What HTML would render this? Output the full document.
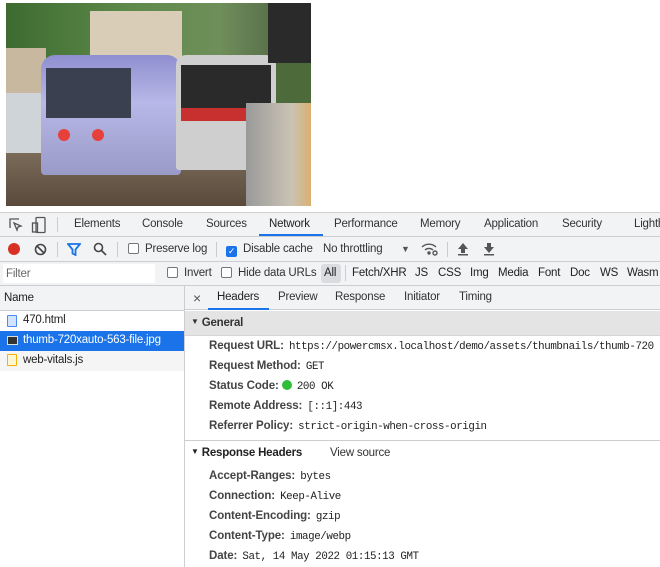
<!DOCTYPE html>
<html><head><meta charset="utf-8"><style>
*{box-sizing:border-box;margin:0;padding:0}
body{width:660px;height:567px;overflow:hidden;background:#fff;font-family:"Liberation Sans",sans-serif;font-size:11.5px;letter-spacing:-0.2px;color:#333;position:relative}
.a{position:absolute;white-space:nowrap}
.mono{font-family:"Liberation Mono",monospace;font-size:10.8px;letter-spacing:-0.4px;font-weight:normal;color:#222;margin-left:2px}
.k{font-weight:bold;color:#444;letter-spacing:-0.1px}
.cb{display:inline-block;width:11px;height:11px;border:1px solid #777;border-radius:2px;vertical-align:-2px;margin-right:6px;background:#fff}
</style></head><body>
<div class="a" style="left:6px;top:3px;width:305px;height:203px;overflow:hidden;background:#4c6a3a">
 <div class="a" style="left:0;top:0;width:305px;height:60px;background:linear-gradient(90deg,#3d6a30,#5d8a4a 40%,#6f8f5a 70%,#4a5a40)"></div>
 <div class="a" style="left:84px;top:8px;width:92px;height:60px;background:#d9cdb8"></div>
 <div class="a" style="left:0;top:45px;width:40px;height:50px;background:#c8b8a0"></div>
 <div class="a" style="left:0;top:90px;width:40px;height:60px;background:#cfd4d8"></div>
 <div class="a" style="left:0;top:150px;width:305px;height:53px;background:linear-gradient(#7a6a58,#5a4a3c)"></div>
 <div class="a" style="left:35px;top:52px;width:140px;height:120px;background:linear-gradient(#8f8fd0,#b8b8e8 40%,#9a9ac8);border-radius:14px 14px 4px 4px"></div>
 <div class="a" style="left:40px;top:65px;width:85px;height:50px;background:#3a4050"></div>
 <div class="a" style="left:52px;top:126px;width:12px;height:12px;border-radius:50%;background:#e6403a"></div>
 <div class="a" style="left:86px;top:126px;width:12px;height:12px;border-radius:50%;background:#e6403a"></div>
 <div class="a" style="left:170px;top:52px;width:100px;height:115px;background:#cfcfcf;border-radius:10px 10px 3px 3px"></div>
 <div class="a" style="left:175px;top:62px;width:90px;height:45px;background:#2a2a2a"></div>
 <div class="a" style="left:175px;top:105px;width:90px;height:13px;background:#c83030"></div>
 <div class="a" style="left:240px;top:100px;width:65px;height:103px;background:linear-gradient(90deg,#9a9a9a,#c9c3b4 70%,#d9b070)"></div>
 <div class="a" style="left:262px;top:0;width:43px;height:60px;background:#2a2a2a"></div>
</div>
<div class="a" style="left:0;top:212px;width:660px;height:25px;background:#f1f3f4;border-bottom:1px solid #cbcdd1;border-top:1px solid #d0d0d0"></div>
<svg class="a" style="left:8px;top:217px" width="16" height="16" viewBox="0 0 16 16" fill="none" stroke="#555" stroke-width="1.3"><path d="M2 11V2h9"/><path d="M6 6l7 3-3 1-1 3z"/></svg>
<svg class="a" style="left:31px;top:216px" width="16" height="18" viewBox="0 0 16 18" fill="none" stroke="#555" stroke-width="1.3"><rect x="5" y="1.5" width="9" height="15" rx="1"/><rect x="1.5" y="7" width="5" height="9"/></svg>
<div class="a" style="left:57px;top:217px;width:1px;height:15px;background:#ccc"></div>
<div class="a" style="top:218px;left:74px">Elements</div>
<div class="a" style="top:218px;left:142px">Console</div>
<div class="a" style="top:218px;left:206px">Sources</div>
<div class="a" style="top:218px;left:269px;color:#222">Network</div>
<div class="a" style="top:234px;left:259px;width:64px;height:2px;background:#1a73e8"></div>
<div class="a" style="top:218px;left:334px">Performance</div>
<div class="a" style="top:218px;left:420px">Memory</div>
<div class="a" style="top:218px;left:484px">Application</div>
<div class="a" style="top:218px;left:562px">Security</div>
<div class="a" style="top:218px;left:634px">Lighth</div>
<div class="a" style="left:0;top:237px;width:660px;height:25px;background:#f1f3f4;border-bottom:1px solid #cbcdd1"></div>
<div class="a" style="left:8px;top:243px;width:12px;height:12px;border-radius:50%;background:#d93025"></div>
<svg class="a" style="left:34px;top:243px" width="13" height="13" viewBox="0 0 13 13" fill="none" stroke="#444" stroke-width="1.6"><circle cx="6.5" cy="6.5" r="5"/><path d="M3 3l7 7"/></svg>
<div class="a" style="left:57px;top:242px;width:1px;height:15px;background:#ccc"></div>
<svg class="a" style="left:67px;top:243px" width="14" height="13" viewBox="0 0 14 13" fill="none" stroke="#1a73e8" stroke-width="1.8"><path d="M1 1h12L8.5 6.5V12L5.5 10.5V6.5z"/></svg>
<svg class="a" style="left:93px;top:242px" width="14" height="14" viewBox="0 0 14 14" fill="none" stroke="#444" stroke-width="1.6"><circle cx="5.5" cy="5.5" r="4"/><path d="M8.5 8.5l4.5 4.5"/></svg>
<div class="a" style="left:117px;top:242px;width:1px;height:15px;background:#ccc"></div>
<div class="a" style="left:128px;top:243px"><span class="cb"></span>Preserve log</div>
<div class="a" style="left:216px;top:242px;width:1px;height:15px;background:#ccc"></div>
<div class="a" style="left:226px;top:243px"><span class="cb" style="background:#1a73e8;border-color:#1a73e8;color:#fff;font-size:9px;line-height:9px;text-align:center">✓</span>Disable cache</div>
<div class="a" style="left:323px;top:243px">No throttling</div>
<div class="a" style="left:401px;top:244px;font-size:9px;color:#555">▼</div>
<svg class="a" style="left:421px;top:242px" width="18" height="14" viewBox="0 0 18 14" fill="none" stroke="#555" stroke-width="1.4"><path d="M1 5a10 10 0 0 1 14 0M4 8a6 6 0 0 1 8 0"/><circle cx="8" cy="11" r="1" fill="#555"/><circle cx="14" cy="11" r="2"/></svg>
<div class="a" style="left:447px;top:242px;width:1px;height:15px;background:#ccc"></div>
<svg class="a" style="left:457px;top:242px" width="12" height="14" viewBox="0 0 12 14" fill="#555"><path d="M6 1l5 6H8v4H4V7H1z"/><rect x="1" y="12" width="10" height="1.5"/></svg>
<svg class="a" style="left:483px;top:242px" width="12" height="14" viewBox="0 0 12 14" fill="#555"><path d="M6 11l5-6H8V1H4v4H1z"/><rect x="1" y="12" width="10" height="1.5"/></svg>
<div class="a" style="left:0;top:262px;width:660px;height:24px;background:#f1f3f4;border-bottom:1px solid #cbcdd1"></div>
<div class="a" style="left:3px;top:264px;width:152px;height:19px;background:#fff"></div>
<div class="a" style="left:6px;top:268px;color:#666">Filter</div>
<div class="a" style="left:167px;top:267px"><span class="cb"></span>Invert</div>
<div class="a" style="left:221px;top:267px"><span class="cb"></span>Hide data URLs</div>
<div class="a" style="left:321px;top:264px;width:20px;height:19px;background:#dadce0;border-radius:3px"></div>
<div class="a" style="left:324px;top:267px;color:#222">All</div>
<div class="a" style="left:345px;top:265px;width:1px;height:16px;background:#ccc"></div>
<div class="a" style="left:352px;top:267px;color:#222">Fetch/XHR</div>
<div class="a" style="left:415px;top:267px;color:#222">JS</div>
<div class="a" style="left:438px;top:267px;color:#222">CSS</div>
<div class="a" style="left:470px;top:267px;color:#222">Img</div>
<div class="a" style="left:498px;top:267px;color:#222">Media</div>
<div class="a" style="left:538px;top:267px;color:#222">Font</div>
<div class="a" style="left:570px;top:267px;color:#222">Doc</div>
<div class="a" style="left:600px;top:267px;color:#222">WS</div>
<div class="a" style="left:627px;top:267px;color:#222">Wasm</div>
<div class="a" style="left:0;top:286px;width:184px;height:25px;background:#f1f3f4;border-bottom:1px solid #cbcdd1"></div>
<div class="a" style="left:4px;top:292px;color:#222">Name</div>
<div class="a" style="left:184px;top:286px;width:1px;height:281px;background:#cbcdd1"></div>
<div class="a" style="left:7px;top:315px;width:10px;height:12px;border:1.5px solid #4a8af4;border-radius:1px;background:#d4e3fc"></div>
<div class="a" style="left:23px;top:314px;color:#222">470.html</div>
<div class="a" style="left:0;top:331px;width:184px;height:20px;background:#1a73e8"></div>
<div class="a" style="left:7px;top:336px;width:11px;height:9px;background:#333;border:1px solid #ddd"></div>
<div class="a" style="left:23px;top:334px;color:#fff">thumb-720xauto-563-file.jpg</div>
<div class="a" style="left:0;top:351px;width:184px;height:20px;background:#f5f5f5"></div>
<div class="a" style="left:7px;top:354px;width:10px;height:12px;border:1.5px solid #f2b200;border-radius:1px;background:#fff6d6"></div>
<div class="a" style="left:23px;top:354px;color:#222">web-vitals.js</div>
<div class="a" style="left:185px;top:286px;width:475px;height:24px;background:#f1f3f4;border-bottom:1px solid #cbcdd1"></div>
<div class="a" style="left:193px;top:290px;font-size:14px;color:#555">×</div>
<div class="a" style="left:217px;top:291px;color:#222">Headers</div>
<div class="a" style="left:208px;top:308px;width:61px;height:2px;background:#1a73e8"></div>
<div class="a" style="left:278px;top:291px">Preview</div>
<div class="a" style="left:335px;top:291px">Response</div>
<div class="a" style="left:404px;top:291px">Initiator</div>
<div class="a" style="left:459px;top:291px">Timing</div>
<div class="a" style="left:185px;top:311px;width:475px;height:25px;background:#e4e4e4;border-bottom:1px solid #d6d6d6"></div>
<div class="a" style="left:191px;top:317px;font-weight:bold;color:#333"><span style="font-size:8px;vertical-align:2px">▼</span> General</div>
<div class="a" style="left:209px;top:340px"><span class="k">Request URL: </span><span class="mono">https://powercmsx.localhost/demo/assets/thumbnails/thumb-720</span></div>
<div class="a" style="left:209px;top:360px"><span class="k">Request Method: </span><span class="mono">GET</span></div>
<div class="a" style="left:209px;top:380px"><span class="k">Status Code: </span><span style="display:inline-block;width:10px;height:10px;border-radius:50%;background:#2fbd3a;vertical-align:-1px"></span> <span class="mono">200 OK</span></div>
<div class="a" style="left:209px;top:400px"><span class="k">Remote Address: </span><span class="mono">[::1]:443</span></div>
<div class="a" style="left:209px;top:420px"><span class="k">Referrer Policy: </span><span class="mono">strict-origin-when-cross-origin</span></div>
<div class="a" style="left:185px;top:440px;width:475px;height:1px;background:#cbcdd1"></div>
<div class="a" style="left:191px;top:447px;font-weight:bold;color:#222"><span style="font-size:8px;vertical-align:2px">▼</span> Response Headers</div>
<div class="a" style="left:330px;top:447px;color:#333">View source</div>
<div class="a" style="left:209px;top:470px"><span class="k">Accept-Ranges: </span><span class="mono">bytes</span></div>
<div class="a" style="left:209px;top:490px"><span class="k">Connection: </span><span class="mono">Keep-Alive</span></div>
<div class="a" style="left:209px;top:510px"><span class="k">Content-Encoding: </span><span class="mono">gzip</span></div>
<div class="a" style="left:209px;top:530px"><span class="k">Content-Type: </span><span class="mono">image/webp</span></div>
<div class="a" style="left:209px;top:550px"><span class="k">Date: </span><span class="mono">Sat, 14 May 2022 01:15:13 GMT</span></div>
</body></html>
